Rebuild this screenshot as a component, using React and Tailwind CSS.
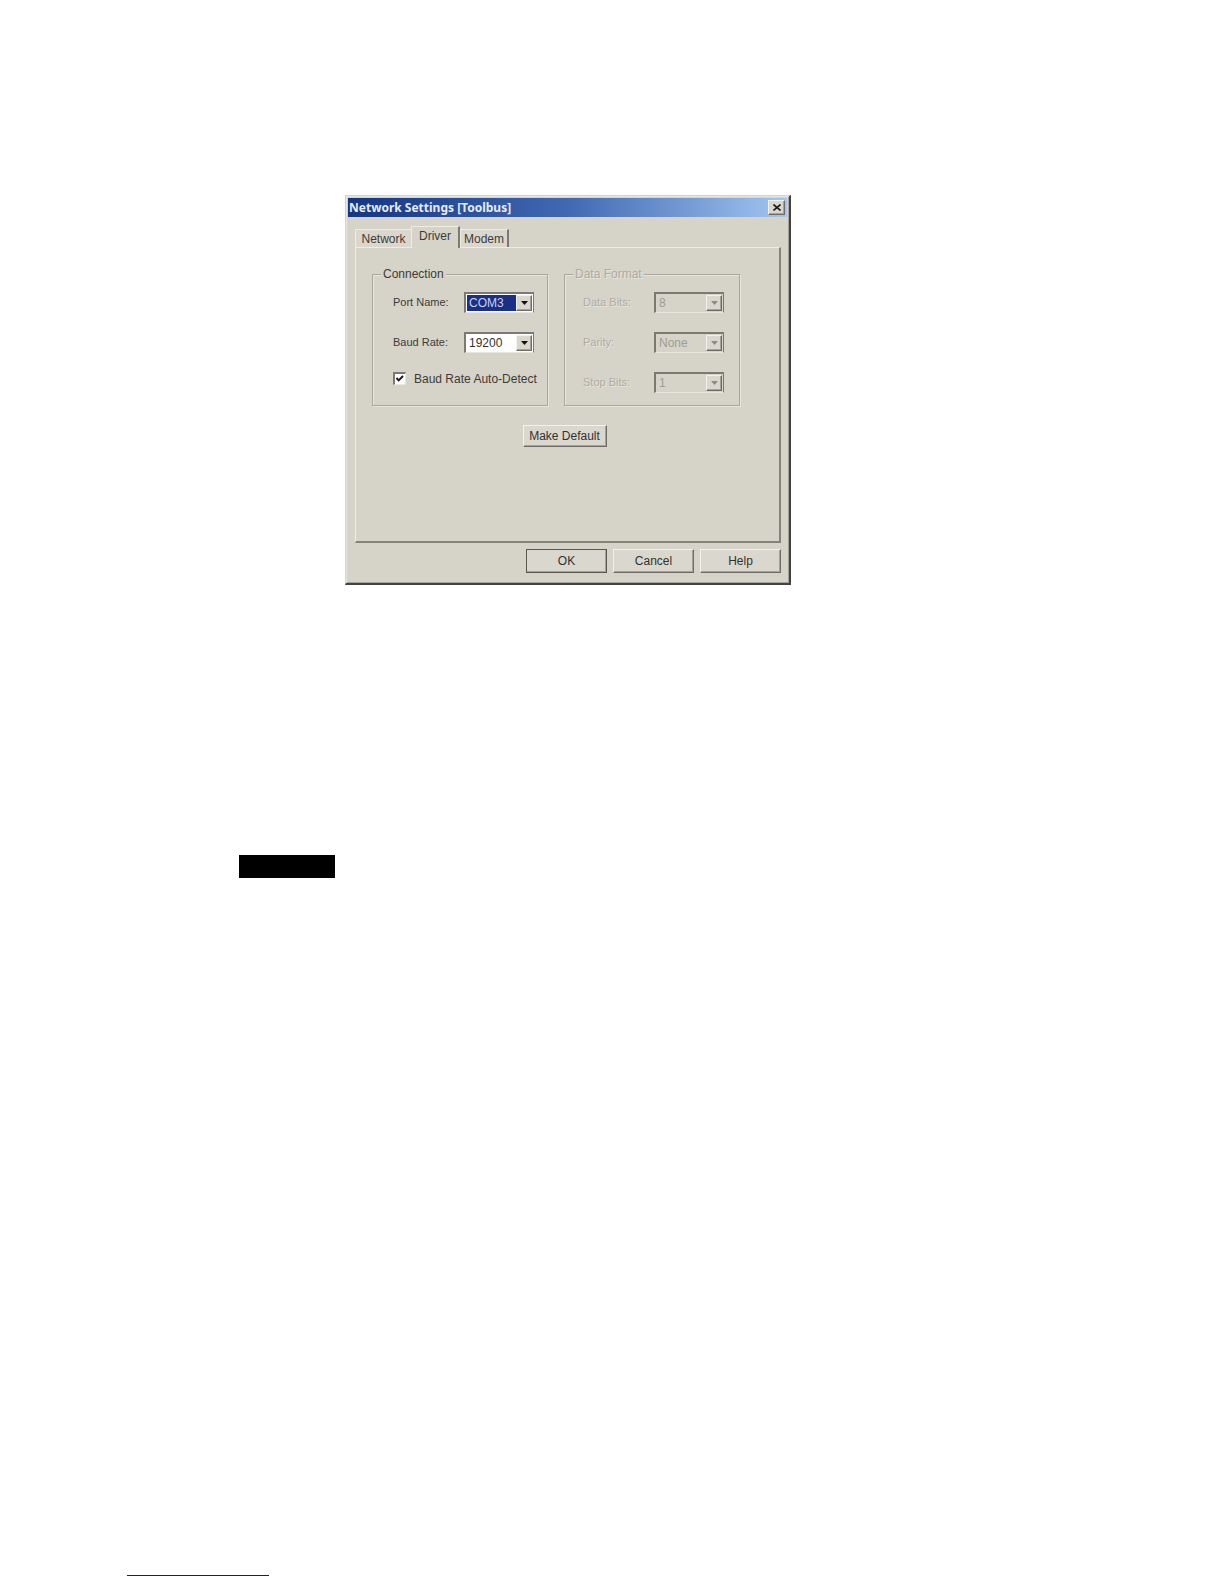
import React, { useState } from "react";

const RAISED =
  "bg-[#dad7cf] border border-t-[#f3f1ec] border-l-[#f3f1ec] border-r-[#6f6c66] border-b-[#6f6c66] shadow-[inset_-1px_-1px_0_#a5a29b]";

function Arrow({ muted }) {
  return (
    <svg width="7" height="4" viewBox="0 0 7 4" aria-hidden="true">
      <path d="M0 0h7L3.5 4z" fill={muted ? "#8d8a83" : "#111111"} />
    </svg>
  );
}

function Combo({ id, label, options, selected, disabled }) {
  const field = disabled
    ? "bg-[#d6d3c9] text-[#a09d96]"
    : selected
      ? "bg-[#1a2f86] text-[#c9d0f0]"
      : "bg-white text-[#33312e]";
  return (
    <div className="flex h-[21px] items-center">
      <label
        htmlFor={id}
        className={`w-[71px] shrink-0 text-[11px] whitespace-nowrap ${
          disabled ? "text-[#aeaba3] [text-shadow:1px_1px_0_#e8e5de]" : "text-[#3d3b37]"
        }`}
      >
        {label}
      </label>
      <div
        className={`flex h-full w-[70px] border-t-2 border-l-2 border-r border-b border-t-[#7c7972] border-l-[#7c7972] border-r-[#7c7972] border-b-[#e9e6df] p-px ${
          disabled ? "bg-[#d6d3c9]" : "bg-white"
        }`}
      >
        <select
          id={id}
          disabled={disabled}
          className={`min-w-0 flex-1 appearance-none pl-0.5 text-xs leading-4 opacity-100 outline-none ${field}`}
        >
          {options.map((o) => (
            <option key={o}>{o}</option>
          ))}
        </select>
        <span className={`pointer-events-none flex w-4 items-center justify-center ${RAISED}`}>
          <Arrow muted={disabled} />
        </span>
      </div>
    </div>
  );
}

function Group({ title, disabled, children }) {
  return (
    <fieldset
      disabled={disabled}
      className="min-w-0 border border-[#aaa79f] px-2 pb-3 shadow-[1px_1px_0_#e8e5de,inset_1px_1px_0_#e8e5de]"
    >
      <legend
        className={`bg-[#d6d3c9] px-0.5 text-xs leading-4 ${
          disabled ? "text-[#aeaba3] [text-shadow:1px_1px_0_#e8e5de]" : "text-[#3d3b37]"
        }`}
      >
        {title}
      </legend>
      <div className={`flex flex-col gap-[19px] pt-2.5 ${disabled ? "pl-2.5" : "pl-3"}`}>
        {children}
      </div>
    </fieldset>
  );
}

function Tab({ label, active, className }) {
  const shape = active
    ? "h-[22px] -mb-px pb-1 border-r-2 bg-[#d6d3c9]"
    : "h-[18px] bg-[#dad7cf]";
  return (
    <button
      type="button"
      role="tab"
      aria-selected={!!active}
      className={`flex items-center justify-center border-t border-l border-[#efece6] border-r-[#7c7972] text-xs text-[#3d3b37] ${shape} ${className}`}
    >
      {label}
    </button>
  );
}

function PushButton({ children, className = "" }) {
  return (
    <button type="button" className={`text-xs leading-4 text-[#33312e] ${RAISED} ${className}`}>
      {children}
    </button>
  );
}

function SettingsDialog() {
  const [auto, setAuto] = useState(true);
  return (
    <div
      role="dialog"
      aria-labelledby="dialog-title"
      className="w-[446px] border-t border-l border-r-2 border-b-2 border-t-[#d6d3c9] border-l-[#d6d3c9] border-r-[#45433f] border-b-[#45433f] bg-[#d6d3c9] p-0.5 shadow-[inset_1px_1px_0_#e8e6e0,inset_-1px_-1px_0_#a5a29b]"
    >
      <div className="flex h-[19px] items-center justify-between bg-linear-to-r from-[#153583] via-[#4169b2] to-[#a3c6f0] pr-0.5 pl-px">
        <h1
          id="dialog-title"
          className="font-['Noto_Sans'] text-xs leading-4 font-bold text-[#e6ebf6]"
        >
          Network Settings [Toolbus]
        </h1>
        <button
          type="button"
          aria-label="Close"
          className={`flex h-[15px] w-[17px] items-center justify-center ${RAISED}`}
        >
          <svg width="8" height="7" viewBox="0 0 8 7" aria-hidden="true">
            <path d="M.5.5l7 6M7.5.5l-7 6" stroke="#1d1b19" strokeWidth="1.6" />
          </svg>
        </button>
      </div>

      <div className="pt-[9px] pr-1.5 pb-2 pl-[7px]">
        <div role="tablist" className="flex items-end">
          <Tab label="Network" className="w-14" />
          <Tab label="Driver" active className="w-[49px]" />
          <Tab label="Modem" className="w-[49px] border-r-2" />
        </div>

        <div
          role="tabpanel"
          className="flex h-[296px] flex-col items-center border-t border-l border-r-2 border-b-2 border-t-[#efece6] border-l-[#efece6] border-r-[#85827b] border-b-[#85827b] pt-[18px] pr-1.5"
        >
          <div className="grid w-full grid-cols-2 gap-4 pr-[33px] pl-4">
            <Group title="Connection">
              <Combo id="port" label="Port Name:" options={["COM3"]} selected />
              <Combo id="baud" label="Baud Rate:" options={["19200"]} />
              <label className="flex h-[21px] items-start gap-2 text-xs leading-[14px] whitespace-nowrap text-[#3d3b37]">
                <span className="grid">
                  <input
                    type="checkbox"
                    checked={auto}
                    onChange={(e) => setAuto(e.target.checked)}
                    className="col-start-1 row-start-1 h-[13px] w-[13px] appearance-none border border-t-2 border-l-2 border-[#e9e6df] border-t-[#7c7972] border-l-[#7c7972] bg-white"
                  />
                  {auto && (
                    <svg
                      className="pointer-events-none col-start-1 row-start-1 h-[13px] w-[13px]"
                      viewBox="0 0 13 13"
                      aria-hidden="true"
                    >
                      <path d="M3.5 6l2.2 2.4L10 4" fill="none" stroke="#1d1b19" strokeWidth="2" />
                    </svg>
                  )}
                </span>
                Baud Rate Auto-Detect
              </label>
            </Group>
            <Group title="Data Format" disabled>
              <Combo id="databits" label="Data Bits:" options={["8"]} disabled />
              <Combo id="parity" label="Parity:" options={["None"]} disabled />
              <Combo id="stopbits" label="Stop Bits:" options={["1"]} disabled />
            </Group>
          </div>
          <PushButton className="mt-[19px] h-[22px] w-[84px]">Make Default</PushButton>
        </div>

        <div className="mt-1.5 flex justify-end gap-1.5">
          <PushButton className="h-6 w-[81px] outline outline-[#5a5751] -outline-offset-1">OK</PushButton>
          <PushButton className="h-6 w-[81px]">Cancel</PushButton>
          <PushButton className="h-6 w-[81px]">Help</PushButton>
        </div>
      </div>
    </div>
  );
}

export default function App() {
  return (
    <div className="flex min-h-screen flex-col bg-white font-['Liberation_Sans',Arial,sans-serif]">
      <main className="pt-[195px] pl-[239px]">
        <div className="pl-[106px]">
          <SettingsDialog />
        </div>
        <div className="mt-[270px] h-[23px] w-24 bg-black" />
      </main>
      <footer className="mt-auto pb-2 pl-[127px]">
        <div className="h-px w-[142px] bg-[#12129c]" />
      </footer>
    </div>
  );
}
